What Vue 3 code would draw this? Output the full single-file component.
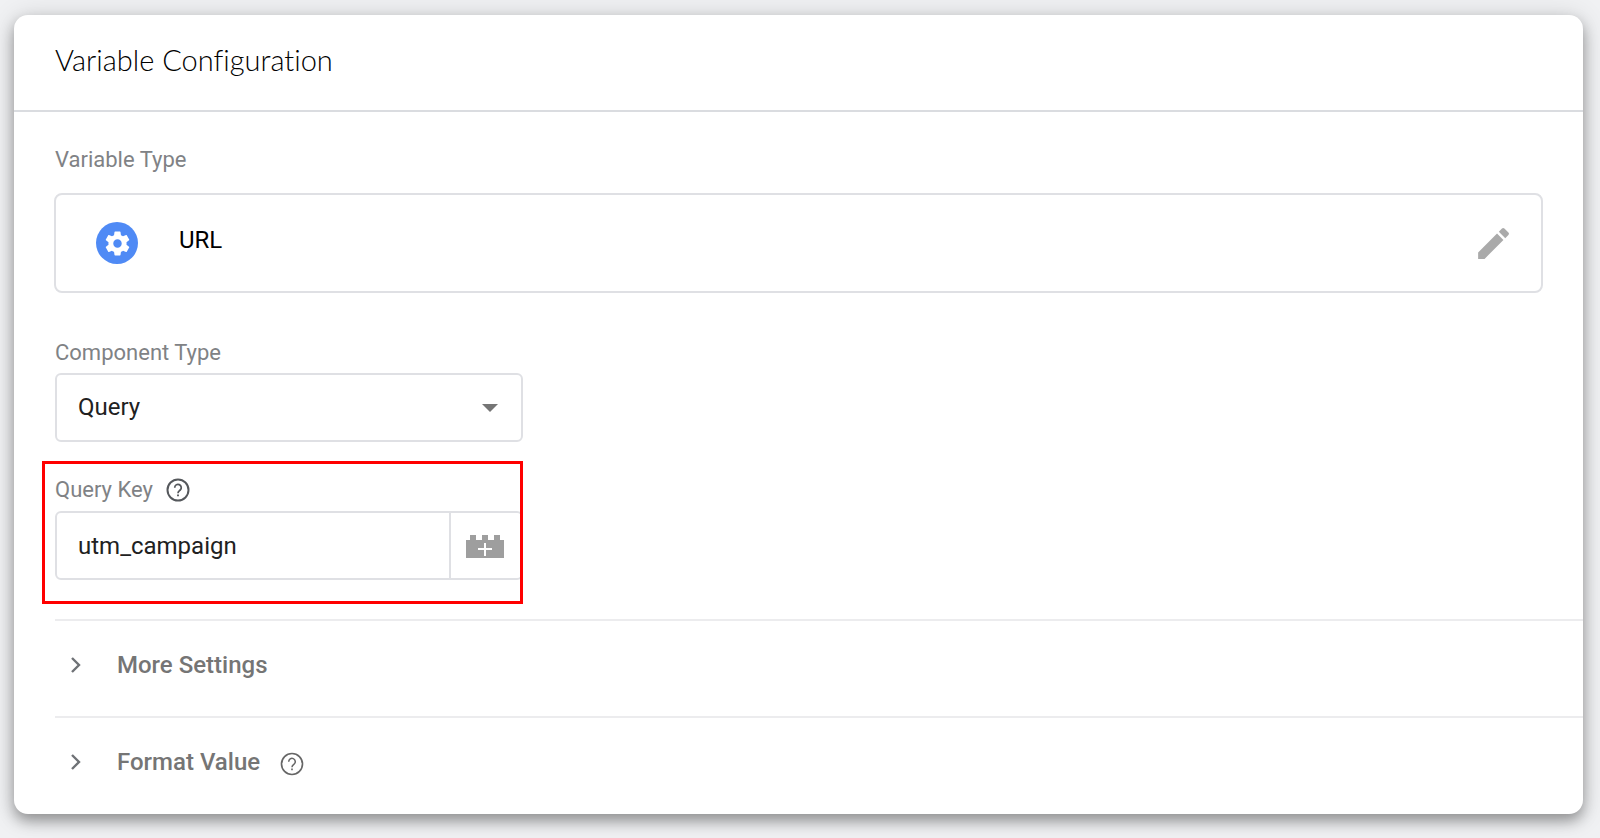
<template>
  <main class="card">
    <header class="card-header">
      <h1>Variable Configuration</h1>
    </header>

    <div class="card-body">
      <section class="type">
        <h2 class="label">Variable Type</h2>
        <div class="type-box">
          <span class="type-icon">
            <svg viewBox="0 0 24 24" width="29" height="29" aria-hidden="true">
              <path fill="#fff" :d="icons.gear" />
            </svg>
          </span>
          <span class="type-name">URL</span>
          <button type="button" class="icon-btn" aria-label="Edit">
            <svg viewBox="0 0 24 24" width="41" height="41" aria-hidden="true">
              <path fill="#aaa" :d="icons.pencil" />
            </svg>
          </button>
        </div>
      </section>

      <div class="field">
        <label class="label" for="component">Component Type</label>
        <div class="select">
          <select id="component" v-model="component">
            <option v-for="c in components" :key="c">{{ c }}</option>
          </select>
          <svg class="caret" viewBox="0 0 16 8" width="16" height="8" aria-hidden="true">
            <path fill="#757575" d="M0 0h16L8 8z" />
          </svg>
        </div>
      </div>

      <div class="field marked">
        <div class="label-row">
          <label class="label" for="key">Query Key</label>
          <button type="button" class="icon-btn" aria-label="Help">
            <svg viewBox="0 0 24 24" width="28" height="28" aria-hidden="true">
              <circle cx="12" cy="12" r="9" fill="none" stroke="#55585c" stroke-width="1.7" />
              <path fill="none" stroke="#55585c" stroke-width="1.5" :d="icons.hook" />
              <path fill="#55585c" d="M11.2 15.8h1.6v1.6h-1.6z" />
            </svg>
          </button>
        </div>
        <div class="input-group">
          <input id="key" v-model="queryKey" type="text" spellcheck="false" />
          <button type="button" class="brick" aria-label="Insert variable">
            <svg viewBox="0 0 38 23" width="38" height="23" aria-hidden="true">
              <path fill="#9e9e9e" d="M0 5h4V0h6v5h6V0h6v5h6V0h6v5h4v18H0z" />
              <path stroke="#fff" stroke-width="2" d="M12 14h14M19 8v13" />
            </svg>
          </button>
        </div>
      </div>
    </div>

    <div class="sections">
      <div v-for="s in sections" :key="s.title" class="section">
        <button type="button" class="toggle" :aria-expanded="s.open" @click="s.open = !s.open">
          <svg viewBox="0 0 11 18" width="11" height="18" aria-hidden="true">
            <path fill="none" stroke="#6f7276" stroke-width="2.4" d="M1 2l7 7-7 7" />
          </svg>
          <span>{{ s.title }}</span>
        </button>
        <button v-if="s.help" type="button" class="icon-btn" aria-label="Help">
          <svg viewBox="0 0 24 24" width="28" height="28" aria-hidden="true">
            <circle cx="12" cy="12" r="9" fill="none" stroke="#666" stroke-width="1.4" />
            <path fill="none" stroke="#666" stroke-width="1.3" :d="icons.hook" />
            <path fill="#666" d="M11.3 15.8h1.4v1.5h-1.4z" />
          </svg>
        </button>
      </div>
    </div>
  </main>
</template>

<script setup>
import { ref } from 'vue'

const component = ref('Query')
const components = ['Full URL', 'Protocol', 'Host Name', 'Port', 'Path', 'Query', 'Fragment']
const queryKey = ref('utm_campaign')

const sections = ref([
  { title: 'More Settings', help: false, open: false },
  { title: 'Format Value', help: true, open: false }
])

const icons = {
  gear: 'M19.43 12.98c.04-.32.07-.64.07-.98s-.03-.66-.07-.98l2.11-1.65c.19-.15.24-.42.12-.64l-2-3.46c-.12-.22-.39-.3-.61-.22l-2.49 1c-.52-.4-1.08-.73-1.69-.98l-.38-2.65C14.46 2.18 14.25 2 14 2h-4c-.25 0-.46.18-.49.42l-.38 2.65c-.61.25-1.17.59-1.69.98l-2.49-1c-.23-.09-.49 0-.61.22l-2 3.46c-.13.22-.07.49.12.64l2.11 1.65c-.04.32-.07.65-.07.98s.03.66.07.98l-2.11 1.65c-.19.15-.24.42-.12.64l2 3.46c.12.22.39.3.61.22l2.49-1c.52.4 1.08.73 1.69.98l.38 2.65c.03.24.24.42.49.42h4c.25 0 .46-.18.49-.42l.38-2.65c.61-.25 1.17-.59 1.69-.98l2.49 1c.23.09.49 0 .61-.22l2-3.46c.12-.22.07-.49-.12-.64l-2.11-1.65zM12 15.5c-1.93 0-3.5-1.57-3.5-3.5s1.57-3.5 3.5-3.5 3.5 1.57 3.5 3.5-1.57 3.5-3.5 3.5z',
  pencil: 'M3 17.25V21h3.75L17.81 9.94l-3.75-3.75L3 17.25zM20.71 7.04a1 1 0 0 0 0-1.41l-2.34-2.34a1 1 0 0 0-1.41 0l-1.83 1.83 3.75 3.75 1.83-1.83z',
  hook: 'M9.2 10a2.8 2.8 0 1 1 4.7 2c-1.1 1-1.9 1.3-1.9 2.8'
}
</script>

<style>
body {
  background: #f0f1f3;
}
</style>

<style scoped>
* {
  box-sizing: border-box;
}

.card {
  margin: 15px 17px 24px 14px;
  background: #fff;
  border-radius: 14px;
  box-shadow: 0 7px 14px rgba(0, 0, 0, 0.34), 0 2px 28px rgba(0, 0, 0, 0.14);
  font-family: Roboto, sans-serif;
  font-size: 24px;
  line-height: 28px;
  color: #212121;
}

.card-header {
  padding: 28px 41px 33px;
  border-bottom: 2px solid #dadce0;
}

h1 {
  margin: 0;
  font-family: Lato, sans-serif;
  font-size: 29px;
  font-weight: 300;
  font-variant-ligatures: none;
  line-height: 34px;
  color: #000;
}

.card-body {
  display: flex;
  flex-direction: column;
  padding: 36px 40px 39px 41px;
}

.label {
  display: block;
  margin: 0;
  font-size: 22px;
  font-weight: 400;
  line-height: 24px;
  color: #808285;
}

.type-box {
  display: flex;
  align-items: center;
  height: 100px;
  margin: 21px 0 48px -1px;
  padding: 0 27px 0 40px;
  border: 2px solid #dfe0e4;
  border-radius: 8px;
}

.type-icon {
  display: flex;
  align-items: center;
  justify-content: center;
  width: 42px;
  height: 42px;
  border-radius: 50%;
  background: #4f8af5;
}

.type-name {
  flex: 1;
  margin-left: 41px;
  padding-bottom: 6px;
  color: #000;
}

button {
  padding: 0;
  border: 0;
  background: none;
  font: inherit;
  color: inherit;
  cursor: pointer;
}

.icon-btn {
  display: flex;
}

.field {
  width: 100%;
  max-width: 468px;
}

.select {
  position: relative;
  margin-top: 8px;
}

select,
input {
  width: 100%;
  height: 69px;
  padding: 0 21px 2px;
  border: 2px solid #dfe0e4;
  border-radius: 6px;
  background: none;
  font: inherit;
  color: inherit;
  outline: none;
}

select {
  appearance: none;
}

.caret {
  position: absolute;
  top: 31px;
  right: 25px;
  pointer-events: none;
}

.marked {
  position: relative;
  margin-top: 36px;
}

/* red frame around the key field */
.marked::after {
  content: '';
  position: absolute;
  inset: -17px 0 -24px -13px;
  border: 3px solid #f00;
  pointer-events: none;
}

.label-row {
  display: flex;
  align-items: center;
  gap: 11px;
  height: 24px;
}

.input-group {
  display: flex;
  height: 69px;
  margin-top: 9px;
  border: 2px solid #dfe0e4;
  border-radius: 6px;
}

.input-group input {
  flex: 1;
  min-width: 0;
  height: 100%;
  padding-bottom: 0;
  border: 0;
}

.brick {
  display: flex;
  align-items: center;
  justify-content: center;
  width: 72px;
  padding: 2px 2px 0 0;
  border-left: 2px solid #dfe0e4;
}

.sections {
  padding: 0 0 1px 41px;
}

.section {
  display: flex;
  align-items: center;
  gap: 18px;
  height: 97px;
  padding: 0 0 4px 16px;
  border-top: 2px solid #ececee;
}

.toggle {
  display: flex;
  align-items: center;
  gap: 35px;
  padding-bottom: 3px;
  font-weight: 500;
  color: #757575;
}
</style>
